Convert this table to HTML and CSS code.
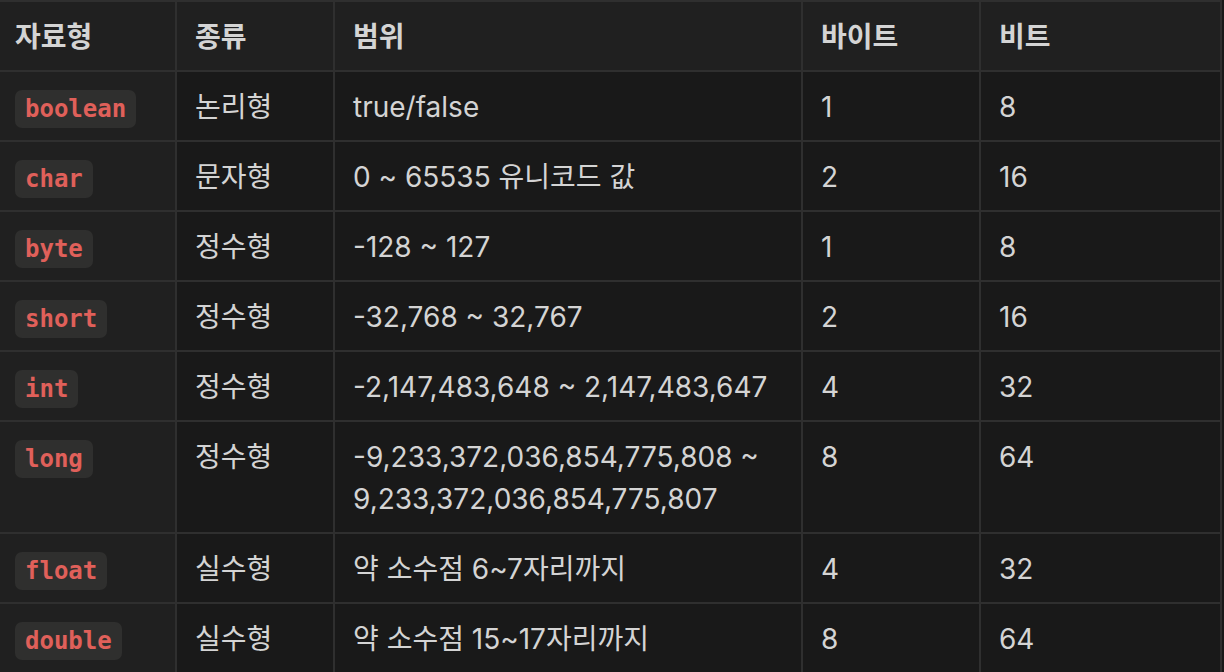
FILE: index.html
```html
<!DOCTYPE html>
<html lang="ko">
<head>
  <meta charset="UTF-8" />
  <meta name="viewport" content="width=device-width, initial-scale=1.0" />
  <title>자바 기본 자료형</title>
  <link rel="stylesheet" href="styles.css">
</head>
<body>
  <table class="type-table">
    <colgroup>
      <col class="col-type">
      <col class="col-kind">
      <col class="col-range">
      <col class="col-byte">
      <col class="col-bit">
    </colgroup>
    <thead>
      <tr>
        <th>자료형</th>
        <th>종류</th>
        <th>범위</th>
        <th>바이트</th>
        <th>비트</th>
      </tr>
    </thead>
    <tbody>
      <tr>
        <th><code>boolean</code></th>
        <td>논리형</td>
        <td>true/false</td>
        <td>1</td>
        <td>8</td>
      </tr>
      <tr>
        <th><code>char</code></th>
        <td>문자형</td>
        <td>0 ~ 65535 유니코드 값</td>
        <td>2</td>
        <td>16</td>
      </tr>
      <tr>
        <th><code>byte</code></th>
        <td>정수형</td>
        <td>-128 ~ 127</td>
        <td>1</td>
        <td>8</td>
      </tr>
      <tr>
        <th><code>short</code></th>
        <td>정수형</td>
        <td>-32,768 ~ 32,767</td>
        <td>2</td>
        <td>16</td>
      </tr>
      <tr>
        <th><code>int</code></th>
        <td>정수형</td>
        <td>-2,147,483,648 ~ 2,147,483,647</td>
        <td>4</td>
        <td>32</td>
      </tr>
      <tr>
        <th><code>long</code></th>
        <td>정수형</td>
        <td>-9,233,372,036,854,775,808 ~ 9,233,372,036,854,775,807</td>
        <td>8</td>
        <td>64</td>
      </tr>
      <tr>
        <th><code>float</code></th>
        <td>실수형</td>
        <td>약 소수점 6~7자리까지</td>
        <td>4</td>
        <td>32</td>
      </tr>
      <tr>
        <th><code>double</code></th>
        <td>실수형</td>
        <td>약 소수점 15~17자리까지</td>
        <td>8</td>
        <td>64</td>
      </tr>
    </tbody>
  </table>
</body>
</html>
```

FILE: styles.css
```css
body {
  margin: 0;
  background: #191919;
  font-family: "Inter", "Noto Sans CJK KR", sans-serif;
  color: #d4d4d4;
}
.type-table {
  border-collapse: collapse;
  table-layout: fixed;
  width: 1221px;
  font-size: 28px;
  line-height: 42px;
}
.col-type { width: 176px; }
.col-kind { width: 158px; }
.col-range { width: 468px; }
.col-byte { width: 178px; }
.col-bit { width: 241px; }
th,
td {
  border: 2px solid #2f2f2f;
  padding: 14px 18px 12px;
  text-align: left;
  vertical-align: top;
}
th {
  background: #202020;
  font-weight: 600;
}
td {
  background: #191919;
  font-weight: 400;
}
tr > :first-child {
  border-left-style: hidden;
  padding-left: 15px;
}
code {
  font-family: "DejaVu Sans Mono", "Liberation Mono", monospace;
  font-size: 24px;
  line-height: 1;
  font-weight: 700;
  color: #e0605a;
  background: #2f2f2e;
  padding: 5px 10px;
  border-radius: 7px;
}
```
